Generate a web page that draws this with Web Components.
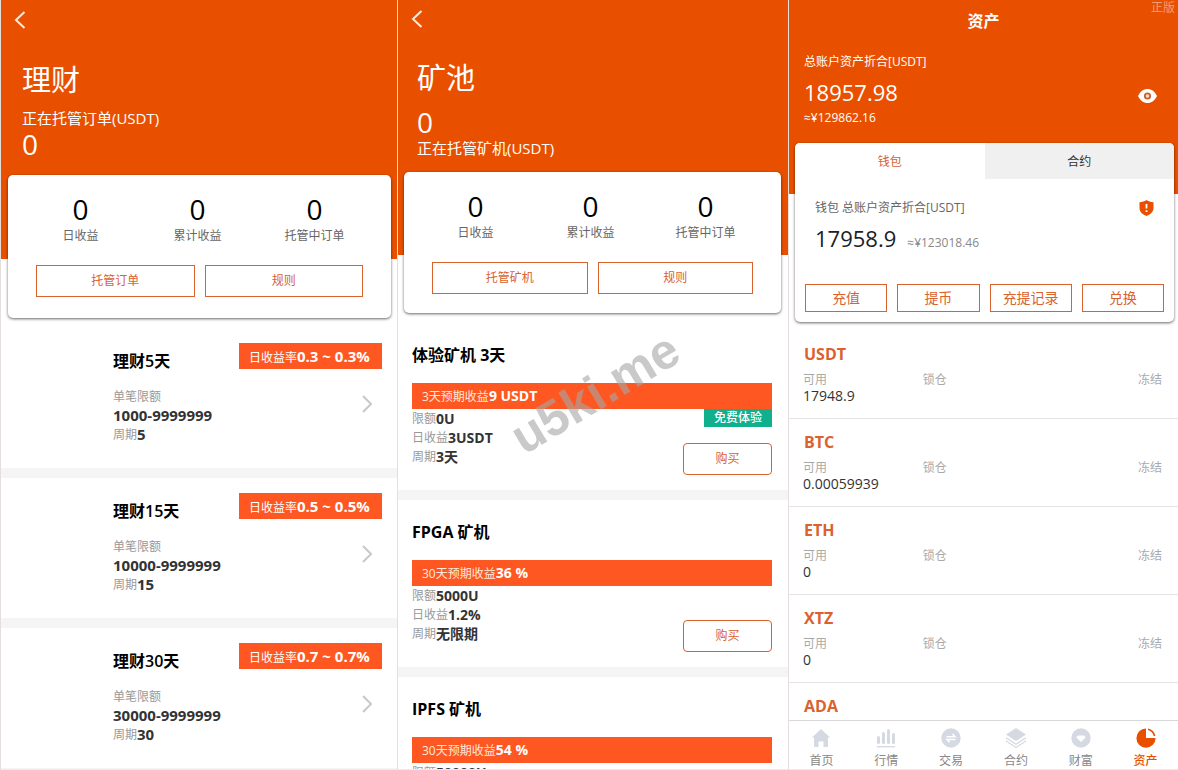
<!DOCTYPE html>
<html lang="zh-CN">
<head>
<meta charset="utf-8">
<title>资产</title>
<style>
  body {
    margin: 0;
    background: #fff;
    color: #333;
    font: 12px/18px "Open Sans", "Noto Sans CJK SC", sans-serif;
    --accent: #e85000;
    --outline: #d9622f;
    --badge: #ff5722;
  }
  .finance { --inset: 21px; --tail: 15px; --overlap: 84px; --card-end: 21px; --card-left: 7px; --card-right: 6px; }
  .mining { --inset: 19px; --bar: 38px; --tail: 14px; --overlap: 83px; --card-end: 19px; --card-left: 6px; --card-right: 7px; }
</style>
</head>
<body>
<screen-board>
  <phone-screen class="finance">
    <hero-panel>
      <hero-title>理财</hero-title>
      <hero-note>正在托管订单(USDT)</hero-note>
      <hero-number>0</hero-number>
    </hero-panel>
    <stat-card>
      <stat-item slot="stats" value="0">日收益</stat-item>
      <stat-item slot="stats" value="0">累计收益</stat-item>
      <stat-item slot="stats" value="0">托管中订单</stat-item>
      <line-button>托管订单</line-button>
      <line-button>规则</line-button>
    </stat-card>
    <plan-item rate="0.3 ~ 0.3%" limit="1000-9999999" period="5">理财5天</plan-item>
    <plan-item rate="0.5 ~ 0.5%" limit="10000-9999999" period="15">理财15天</plan-item>
    <plan-item rate="0.7 ~ 0.7%" limit="30000-9999999" period="30">理财30天</plan-item>
  </phone-screen>

  <phone-screen class="mining">
    <hero-panel>
      <hero-title>矿池</hero-title>
      <hero-number>0</hero-number>
      <hero-note>正在托管矿机(USDT)</hero-note>
    </hero-panel>
    <stat-card>
      <stat-item slot="stats" value="0">日收益</stat-item>
      <stat-item slot="stats" value="0">累计收益</stat-item>
      <stat-item slot="stats" value="0">托管中订单</stat-item>
      <line-button>托管矿机</line-button>
      <line-button>规则</line-button>
    </stat-card>
    <miner-item days="3" yield="9 USDT" limit="0U" daily="3USDT" period="3天" tag="免费体验" action="购买">体验矿机 3天</miner-item>
    <miner-item days="30" yield="36 %" limit="5000U" daily="1.2%" period="无限期" action="购买">FPGA 矿机</miner-item>
    <miner-item days="30" yield="54 %" limit="50000U">IPFS 矿机</miner-item>
  </phone-screen>

  <phone-screen>
    <asset-hero total="18957.98" approx="≈¥129862.16">资产</asset-hero>
    <wallet-card total="17958.9" approx="≈¥123018.46">
      <line-button>充值</line-button>
      <line-button>提币</line-button>
      <line-button>充提记录</line-button>
      <line-button>兑换</line-button>
    </wallet-card>
    <coin-row available="17948.9">USDT</coin-row>
    <coin-row available="0.00059939">BTC</coin-row>
    <coin-row available="0">ETH</coin-row>
    <coin-row available="0">XTZ</coin-row>
    <coin-row>ADA</coin-row>
    <tab-bar slot="footer">
      <tab-link icon="home">首页</tab-link>
      <tab-link icon="bars">行情</tab-link>
      <tab-link icon="swap">交易</tab-link>
      <tab-link icon="layers">合约</tab-link>
      <tab-link icon="wealth">财富</tab-link>
      <tab-link icon="pie" current>资产</tab-link>
    </tab-bar>
  </phone-screen>

  <site-mark slot="mark">u5ki.me</site-mark>
  <corner-mark slot="mark">正版</corner-mark>
</screen-board>

<script>
const BASE = `
  *, *::before { box-sizing: border-box; }
  h1, h2, h3, p, dl, dd, dt { margin: 0; font: inherit; }
  button { font: inherit; color: inherit; margin: 0; padding: 0; border: 0; background: none; cursor: pointer; }
  svg { display: block; }
`;

function define(name, render) {
  customElements.define(name, class extends HTMLElement {
    constructor() {
      super();
      this.attachShadow({ mode: "open" });
    }
    connectedCallback() {
      const template = document.createElement("template");
      template.innerHTML = render(key => this.getAttribute(key) ?? "", this);
      this.shadowRoot.replaceChildren(template.content.cloneNode(true));
    }
  });
}

const pair = (label, value) => value && `<div><dt>${label}</dt><dd>${value}</dd></div>`;

define("screen-board", () => `
  <style>${BASE}
    :host { display: grid; grid-template-columns: 397fr 391fr 390fr; height: 100vh; position: relative; overflow: hidden; }
  </style>
  <slot></slot><slot name="mark"></slot>`);

define("phone-screen", () => `
  <style>${BASE}
    :host { display: flex; flex-direction: column; min-width: 0; min-height: 0; border-left: 1px solid #e4dfdc; border-bottom: 1px solid #ececec; box-sizing: border-box; overflow: hidden; }
    main { flex: 1; min-height: 0; overflow: hidden; }
  </style>
  <main><slot></slot></main><slot name="footer"></slot>`);

define("hero-panel", () => `
  <style>${BASE}
    :host { display: block; background: var(--accent); color: #fff; padding-bottom: calc(var(--tail) + var(--overlap)); }
    button { display: flex; align-items: center; height: var(--bar, 40px); width: 44px; padding-left: 12px; }
    div { padding: 22px var(--inset) 0; display: flex; flex-direction: column; }
  </style>
  <button type="button" aria-label="返回">
    <svg width="14" height="18" viewBox="0 0 14 18" fill="none" stroke="#ffe9dc" stroke-width="2"><path d="M11.500 1 3 9l8.500 8"/></svg>
  </button>
  <div><slot></slot></div>`);

define("hero-title", () => `
  <style>${BASE} :host { display: block; margin-bottom: 10px; } h1 { font-size: 29px; line-height: 36px; }</style>
  <h1><slot></slot></h1>`);
define("hero-note", () => `
  <style>${BASE} :host { display: block; font-size: 15px; line-height: 20px; }</style><slot></slot>`);
define("hero-number", () => `
  <style>${BASE} :host { display: block; font-size: 28px; line-height: 32px; }</style><slot></slot>`);

define("stat-card", () => `
  <style>${BASE}
    :host { display: block; position: relative; background: #fff; border-radius: 5px; box-shadow: 0 1px 3px rgba(0,0,0,.6);
      margin: calc(0px - var(--overlap)) var(--card-right) 10px var(--card-left); padding: 17px 14px var(--card-end); }
    .stats { display: grid; grid-template-columns: repeat(3, 1fr); padding-right: 4px; }
    .actions { display: grid; grid-template-columns: repeat(2, 1fr); gap: 10px; margin: 20px 14px 0; height: 32px; }
  </style>
  <div class="stats"><slot name="stats"></slot></div>
  <div class="actions"><slot></slot></div>`);

define("stat-item", attr => `
  <style>${BASE}
    :host { display: flex; flex-direction: column; align-items: center; gap: 1px; color: #666; }
    strong { font-weight: 400; font-size: 28px; line-height: 34px; color: #000; }
  </style>
  <strong>${attr("value")}</strong><span><slot></slot></span>`);

define("line-button", () => `
  <style>${BASE}
    :host { display: block; min-width: 0; }
    button { width: 100%; height: 100%; border: 1px solid var(--outline); border-radius: var(--button-radius, 0); color: var(--outline); }
  </style>
  <button type="button"><slot></slot></button>`);

define("plan-item", attr => `
  <style>${BASE}
    :host { display: grid; grid-template-columns: 1fr auto; height: 150px; border-bottom: 10px solid #f5f5f5; box-sizing: border-box; padding: 15px 15px 0 112px; align-content: start; }
    h2 { font-size: 16px; line-height: 24px; font-weight: 600; color: #000; padding-top: 6px; }
    b { font-weight: 700; }
    .rate { background: var(--badge); color: #fff; line-height: 26px; height: 26px; min-width: 143px; padding: 0 10px; }
    .rate b, dd { font-size: 15px; }
    dl { line-height: 19px; margin-top: 14px; color: #999; }
    dd { font-weight: 700; color: #333; }
    .row { display: flex; }
    button { justify-self: end; width: 20px; height: 36px; margin: 13px 9px 0 0; }
    svg { margin-left: auto; }
  </style>
  <h2><slot></slot></h2>
  <span class="rate">日收益率<b>${attr("rate")}</b></span>
  <dl><dt>单笔限额</dt><dd>${attr("limit")}</dd><div class="row"><dt>周期</dt><dd>${attr("period")}</dd></div></dl>
  <button type="button" aria-label="查看"><svg width="11" height="18" viewBox="0 0 11 18" fill="none" stroke="#c8c8c8" stroke-width="2"><path d="M1 1l8 8-8 8"/></svg></button>`);

define("miner-item", attr => `
  <style>${BASE}
    :host { display: block; height: 177px; border-bottom: 10px solid #f5f5f5; box-sizing: border-box; padding: 20px 16px 0 14px; }
    h2 { font-size: 16px; line-height: 24px; font-weight: 700; color: #000; margin-bottom: 16px; }
    .yield { background: var(--badge); color: #ffe9dc; line-height: 26px; height: 26px; padding: 0 10px; }
    .yield b { color: #fff; font-size: 14px; }
    .body { display: flex; justify-content: space-between; }
    dl { line-height: 19px; color: #999; }
    dl div { display: flex; }
    dd { font-size: 14px; font-weight: 700; color: #333; }
    .side { display: flex; flex-direction: column; justify-content: space-between; align-items: flex-end; height: 66px; }
    .tag { background: #10b08c; color: #fff; font-weight: 500; padding: 0 10px; }
    line-button { width: 89px; height: 32px; margin-top: auto; --button-radius: 4px; }
  </style>
  <h2><slot></slot></h2>
  <p class="yield">${attr("days")}天预期收益<b>${attr("yield")}</b></p>
  <div class="body">
    <dl>${pair("限额", attr("limit"))}${pair("日收益", attr("daily"))}${pair("周期", attr("period"))}</dl>
    <div class="side">${attr("tag") && `<span class="tag">${attr("tag")}</span>`}${attr("action") && `<line-button>${attr("action")}</line-button>`}</div>
  </div>`);

define("asset-hero", attr => `
  <style>${BASE}
    :host { display: block; background: var(--accent); color: #fff; padding: 0 21px 68px 15px; }
    h1 { font-size: 16px; line-height: 42px; font-weight: 700; text-align: center; margin: 0 0 11px 6px; }
    .row { display: flex; justify-content: space-between; align-items: flex-start; height: 34px; margin-top: 5px; line-height: 32px; }
    .row button { padding: 13px 0 6px; }
    strong { font-size: 22px; font-weight: 400; }
    .approx { line-height: 16px; }
  </style>
  <h1><slot></slot></h1>
  <p>总账户资产折合[USDT]</p>
  <div class="row"><strong>${attr("total")}</strong>
    <button type="button" aria-label="显示或隐藏金额"><svg width="19" height="14" viewBox="0 0 19 14">
      <path d="M0 7C2.200 2.500 5.500 0 9.500 0S16.800 2.500 19 7c-2.200 4.500-5.500 7-9.500 7S2.200 11.500 0 7z" fill="#fff"/>
      <circle cx="9.500" cy="7" r="2.700" fill="#ffd9c4" stroke="#c8622c" stroke-width="1.800"/></svg></button></div>
  <p class="approx">${attr("approx")}</p>`);

define("wallet-card", attr => `
  <style>${BASE}
    :host { display: block; position: relative; background: #fff; border-radius: 5px; box-shadow: 0 1px 3px rgba(0,0,0,.6); margin: -51px 4px 9px 6px; padding-bottom: 10px; }
    .tabs { display: grid; grid-template-columns: 1fr 1fr; height: 36px; border-radius: 5px 5px 0 0; overflow: hidden; }
    .tabs button { background: #f0f0f0; color: #333; padding-top: 1px; }
    .tabs button[aria-selected="true"] { background: #fff; color: var(--outline); }
    .row { display: flex; justify-content: space-between; align-items: center; height: 18px; margin: 20px 20px 6px; color: #666; }
    .sum { display: flex; align-items: baseline; gap: 11px; height: 55px; margin: 0 20px 6px; line-height: 30px; color: #888; }
    strong { font-size: 22px; font-weight: 400; color: #1a2027; }
    .actions { display: grid; grid-template-columns: repeat(4, 1fr); gap: 10px; height: 28px; margin: 0 10px; font-size: 14px; }
  </style>
  <div class="tabs" role="tablist"><button type="button" role="tab" aria-selected="true">钱包</button><button type="button" role="tab" aria-selected="false">合约</button></div>
  <div class="row"><span>钱包 总账户资产折合[USDT]</span>
    <svg width="15" height="16" viewBox="0 0 15 16"><path d="M7.500 0c2 1.400 4.500 2.100 7 2.200V8c0 3.700-2.700 6.300-7 8-4.300-1.700-7-4.300-7-8V2.200C3 2.100 5.500 1.400 7.500 0z" fill="#e85000"/><path d="M7.500 4v4.600M7.500 10.200v1.800" stroke="#fff" stroke-width="1.800"/></svg></div>
  <p class="sum"><strong>${attr("total")}</strong><span>${attr("approx")}</span></p>
  <div class="actions"><slot></slot></div>`);

define("coin-row", attr => `
  <style>${BASE}
    :host { display: block; height: 88px; box-sizing: border-box; border-bottom: 1px solid #e4e4e4; padding: 11px 16px 0 14px; }
    h3 { font-size: 16px; line-height: 24px; font-weight: 700; color: var(--outline); margin: 0 0 6px 1px; }
    dl { display: grid; grid-template-columns: repeat(3, 1fr); line-height: 16px; color: #aaa; }
    dl div:last-child { text-align: right; }
    dd { font-size: 14px; color: #333; }
  </style>
  <h3><slot></slot></h3>
  ${attr("available") && `<dl><div><dt>可用</dt><dd>${attr("available")}</dd></div><div><dt>锁仓</dt></div><div><dt>冻结</dt></div></dl>`}`);

define("tab-bar", () => `
  <style>${BASE}
    :host { display: block; }
    nav { display: grid; grid-template-columns: repeat(6, 1fr); height: 49px; border-top: 1px solid #d8d8d8; background: #fff; }
  </style>
  <nav><slot></slot></nav>`);

const ICONS = {
  home: `<path d="M10 1l9 8.500h-2V18a1 1 0 0 1-1 1h-3.500v-5.500h-5V19H4a1 1 0 0 1-1-1V9.500H1z"/>`,
  bars: `<rect x="1" y="8" width="3" height="8" rx="1.500"/><rect x="6" y="4" width="3" height="12" rx="1.500"/><rect x="11" y="1" width="3" height="15" rx="1.500"/><rect x="16" y="5" width="3" height="11" rx="1.500"/><rect x="1" y="18" width="18" height="1.400"/>`,
  swap: `<circle cx="10" cy="10" r="9.700"/><path d="M5.500 8.700h8.500L11.500 6M14.500 11.500H6l2.500 2.700" fill="none" stroke="#fff" stroke-width="1.500"/>`,
  layers: `<path d="M10 0l10 6.500L10 13 0 6.500z"/><path d="M0 9.800l10 6.400 10-6.400M0 13l10 6.400L20 13" fill="none" stroke="#d5d9e2" stroke-width="1.200"/>`,
  wealth: `<circle cx="10" cy="10" r="9.700"/><path d="M7 7.500h6l1.700 2.100L10 14 5.300 9.600z" fill="#fff"/>`,
  pie: `<path d="M10 .5V10h9.600A9.600 9.600 0 1 1 10 .5z"/><path d="M12 .5c4.200.8 6.600 3.500 7.400 7.500h-1.700c-.700-2.900-2.500-5-5.700-6z"/>`
};

define("tab-link", (attr, el) => `
  <style>${BASE}
    :host { display: block; }
    a { display: flex; flex-direction: column; align-items: center; padding-top: 7px; gap: 4px; text-decoration: none; line-height: 17px; color: #888; fill: #d5d9e2; }
    a[aria-current] { color: var(--accent); fill: var(--accent); font-weight: 500; }
  </style>
  <a href="#" ${el.hasAttribute("current") ? 'aria-current="page"' : ""}><svg width="20" height="20" viewBox="0 0 20 20">${ICONS[attr("icon")]}</svg><span><slot></slot></span></a>`);

define("site-mark", () => `
  <style>${BASE}
    :host { position: absolute; left: 50.5%; top: 51%; transform: translate(-50%, -50%) rotate(-31deg); font-family: "Liberation Sans", Arial, sans-serif; font-size: 50px; line-height: 54px; font-weight: 700; color: rgba(165,165,165,.6); pointer-events: none; white-space: nowrap; }
  </style><slot></slot>`);

define("corner-mark", () => `
  <style>${BASE}
    :host { position: absolute; right: 3px; top: 0; font-size: 12px; line-height: 16px; color: rgba(255,255,255,.45); pointer-events: none; }
  </style><slot></slot>`);
</script>
</body>
</html>
